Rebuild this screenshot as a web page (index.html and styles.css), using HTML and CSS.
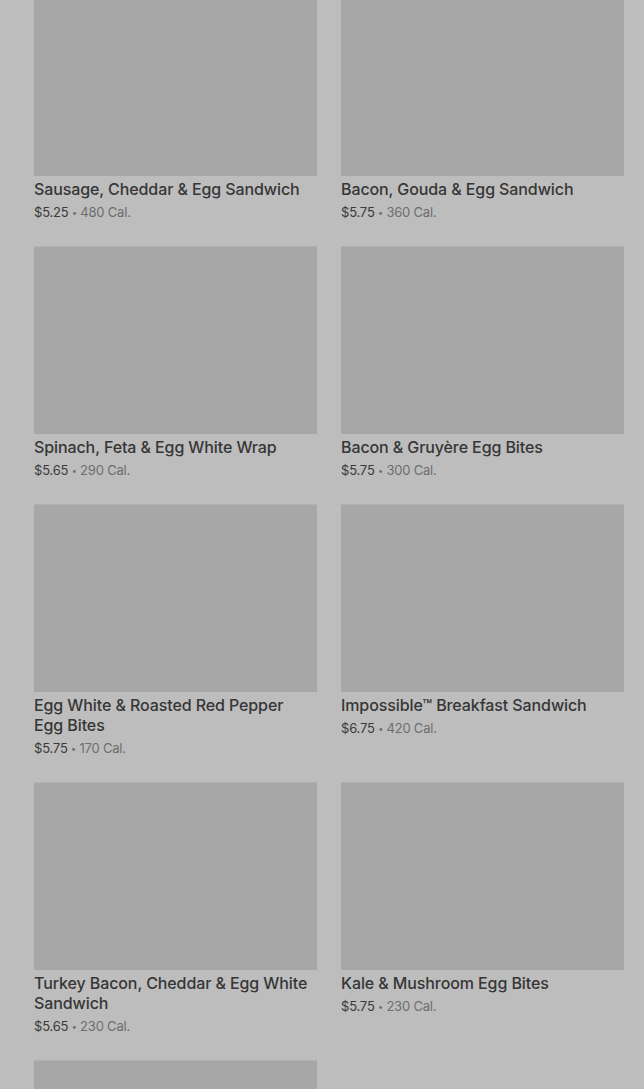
FILE: index.html
```html
<!DOCTYPE html>
<html lang="en">
<head>
<meta charset="utf-8">
<title>Menu</title>
<link rel="stylesheet" href="styles.css">
</head>
<body>
<div class="page">
  <ul class="grid">
    <li class="item"><div class="thumb"></div><div class="name">Sausage, Cheddar &amp; Egg Sandwich</div><div class="meta"><span class="price">$5.25</span> <span class="dot">•</span> 480 Cal.</div></li>
    <li class="item"><div class="thumb"></div><div class="name">Bacon, Gouda &amp; Egg Sandwich</div><div class="meta"><span class="price">$5.75</span> <span class="dot">•</span> 360 Cal.</div></li>
    <li class="item"><div class="thumb"></div><div class="name">Spinach, Feta &amp; Egg White Wrap</div><div class="meta"><span class="price">$5.65</span> <span class="dot">•</span> 290 Cal.</div></li>
    <li class="item"><div class="thumb"></div><div class="name">Bacon &amp; Gruyère Egg Bites</div><div class="meta"><span class="price">$5.75</span> <span class="dot">•</span> 300 Cal.</div></li>
    <li class="item"><div class="thumb"></div><div class="name">Egg White &amp; Roasted Red Pepper Egg Bites</div><div class="meta"><span class="price">$5.75</span> <span class="dot">•</span> 170 Cal.</div></li>
    <li class="item"><div class="thumb"></div><div class="name">Impossible™ Breakfast Sandwich</div><div class="meta"><span class="price">$6.75</span> <span class="dot">•</span> 420 Cal.</div></li>
    <li class="item"><div class="thumb"></div><div class="name">Turkey Bacon, Cheddar &amp; Egg White Sandwich</div><div class="meta"><span class="price">$5.65</span> <span class="dot">•</span> 230 Cal.</div></li>
    <li class="item"><div class="thumb"></div><div class="name">Kale &amp; Mushroom Egg Bites</div><div class="meta"><span class="price">$5.75</span> <span class="dot">•</span> 230 Cal.</div></li>
    <li class="item"><div class="thumb"></div></li>
  </ul>
</div>
</body>
</html>
```
FILE: styles.css
```css
html, body {
  margin: 0;
  padding: 0;
  background: #bdbdbd;
  overflow: hidden;
}
body {
  font-family: Inter, Roboto, "Liberation Sans", sans-serif;
  height: 1089px;
}
.page {
  padding: 0 20px 0 34px;
}
.grid {
  list-style: none;
  margin: -12px 0 0 0;
  padding: 0;
  display: grid;
  grid-template-columns: 283px 283px;
  column-gap: 24px;
  row-gap: 24px;
  align-items: start;
}
.item {
  display: flex;
  flex-direction: column;
}
.thumb {
  height: 188px;
  background: #a7a7a7;
  box-shadow: inset 0 1px 0 #b0b0b0;
}
.name {
  margin-top: 3px;
  padding-right: 8px;
  font-size: 16px;
  line-height: 20px;
  font-weight: 500;
  color: #363636;
  letter-spacing: -0.1px;
}
.meta {
  margin-top: 3px;
  height: 20px;
  font-size: 13px;
  line-height: 20px;
  color: #6e6e6e;
  letter-spacing: -0.2px;
}
.dot {
  font-size: 9px;
  line-height: 0;
  vertical-align: 1px;
}
.price {
  color: #3a3a3a;
}
```
